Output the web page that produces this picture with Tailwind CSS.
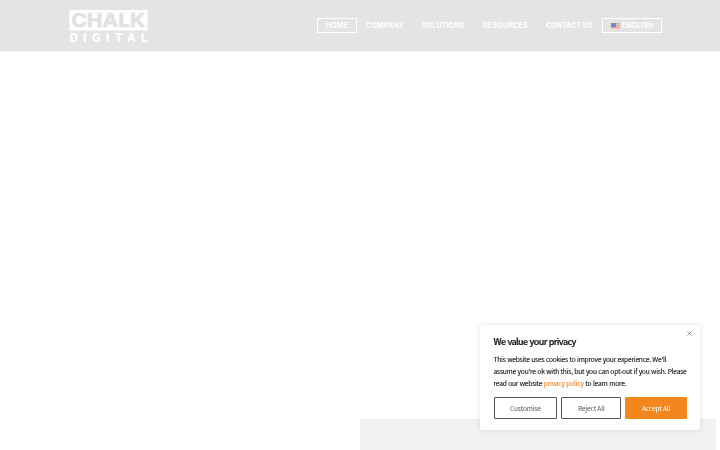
<!DOCTYPE html>
<html lang="en">
<head>
  <meta charset="UTF-8" />
  <meta name="viewport" content="width=device-width, initial-scale=1.0"/>
  <title>Chalk Digital</title>
  <script src="https://cdn.jsdelivr.net/npm/@tailwindcss/browser@4"></script>
</head>
<body class="bg-white h-screen overflow-hidden flex flex-col justify-between">

  <!-- Header -->
  <header class="h-[52px] bg-[#e4e4e4] border-b border-[#f3f3f3] flex items-start justify-between pl-[69px] pr-[58px] text-white">
    <a href="#" class="mt-[9px] block">
      <svg class="overflow-visible" width="79" height="34" viewBox="0 0 79 34" font-family="Inter, sans-serif">
        <rect x="0.5" y="1" width="78" height="20.5" fill="#fff"/>
        <text x="2.2" y="18" font-size="19" font-weight="700" fill="#e1e1e1" stroke="#e1e1e1" stroke-width="0.5" textLength="74" lengthAdjust="spacingAndGlyphs">CHALK</text>
        <text x="0.5" y="32.8" font-size="11.5" font-weight="700" fill="#fff" stroke="#fff" stroke-width="0.2" textLength="78">DIGITAL</text>
      </svg>
    </a>

    <nav class="mt-[18px] h-[15px] flex items-center font-['Inter',sans-serif] text-[7px] leading-[15px] font-bold whitespace-nowrap">
      <a href="#" class="w-10 h-[15px] border border-white flex items-center justify-center tracking-[0.3px]">HOME</a>
      <a href="#" class="ml-[9px] w-[38px] tracking-[0.2px]">COMPANY</a>
      <a href="#" class="ml-[18px] w-[43px] tracking-[0.15px]">SOLUTIONS</a>
      <a href="#" class="ml-[18px] w-[45px] tracking-[0.25px]">RESOURCES</a>
      <a href="#" class="ml-[18px] w-[47px] tracking-[0.08px]">CONTACT US</a>
      <a href="#" class="ml-[9px] w-[60px] h-[15px] border border-white flex items-center justify-center gap-[2px] tracking-[0.15px]">
        <svg width="9" height="6" viewBox="0 0 9 6">
          <rect width="9" height="6" fill="#f1c8c4"/>
          <path d="M0 .5h9M0 2.5h9M0 4.5h9" stroke="#e9a098"/>
          <rect width="5" height="4" fill="#6f8bc4"/>
        </svg>
        ENGLISH
      </a>
    </nav>
  </header>

  <!-- Content block -->
  <section class="ml-[360px] w-[356px] h-[31px] bg-[#eff2f1]"></section>

  <!-- Cookie notice -->
  <div class="fixed right-5 bottom-5 w-[220px] h-[105px] bg-white rounded-[3px] shadow-[0_0_5px_rgba(0,0,0,0.12)] pl-[13.5px] pr-[13px] text-[#111] font-['Noto_Sans_CJK_SC',sans-serif]">
    <button class="absolute right-2 top-[6px]">
      <svg width="5" height="5" viewBox="0 0 5 5" stroke="#777" stroke-width="0.7"><path d="M.4.4l4.2 4.2M4.6.4L.4 4.6"/></svg>
    </button>
    <h2 class="pt-[10px] text-[9px] leading-[14px] font-medium tracking-[-0.62px] [word-spacing:0.6px] [-webkit-text-stroke:0.2px]">We value your privacy</h2>
    <p class="mt-1 text-[6.7px] leading-3 whitespace-nowrap tracking-[-0.24px] [word-spacing:0.3px] [-webkit-text-stroke:0.1px]">
      This website uses cookies to improve your experience. We'll<br>
      assume you're ok with this, but you can opt-out if you wish. Please<br>
      read our website <a href="#" class="text-[#f4872a]">privacy policy</a> to learn more.
    </p>
    <div class="mt-2 flex gap-1 text-[6.6px] leading-none tracking-[-0.15px] text-[#555]">
      <button class="w-16 h-[22px] border border-[#555] rounded-[1px]">Customise</button>
      <button class="w-[60px] h-[22px] border border-[#555] rounded-[1px]">Reject All</button>
      <button class="w-[62px] h-[22px] bg-[#f4861f] text-white rounded-[1px]">Accept All</button>
    </div>
  </div>

</body>
</html>
